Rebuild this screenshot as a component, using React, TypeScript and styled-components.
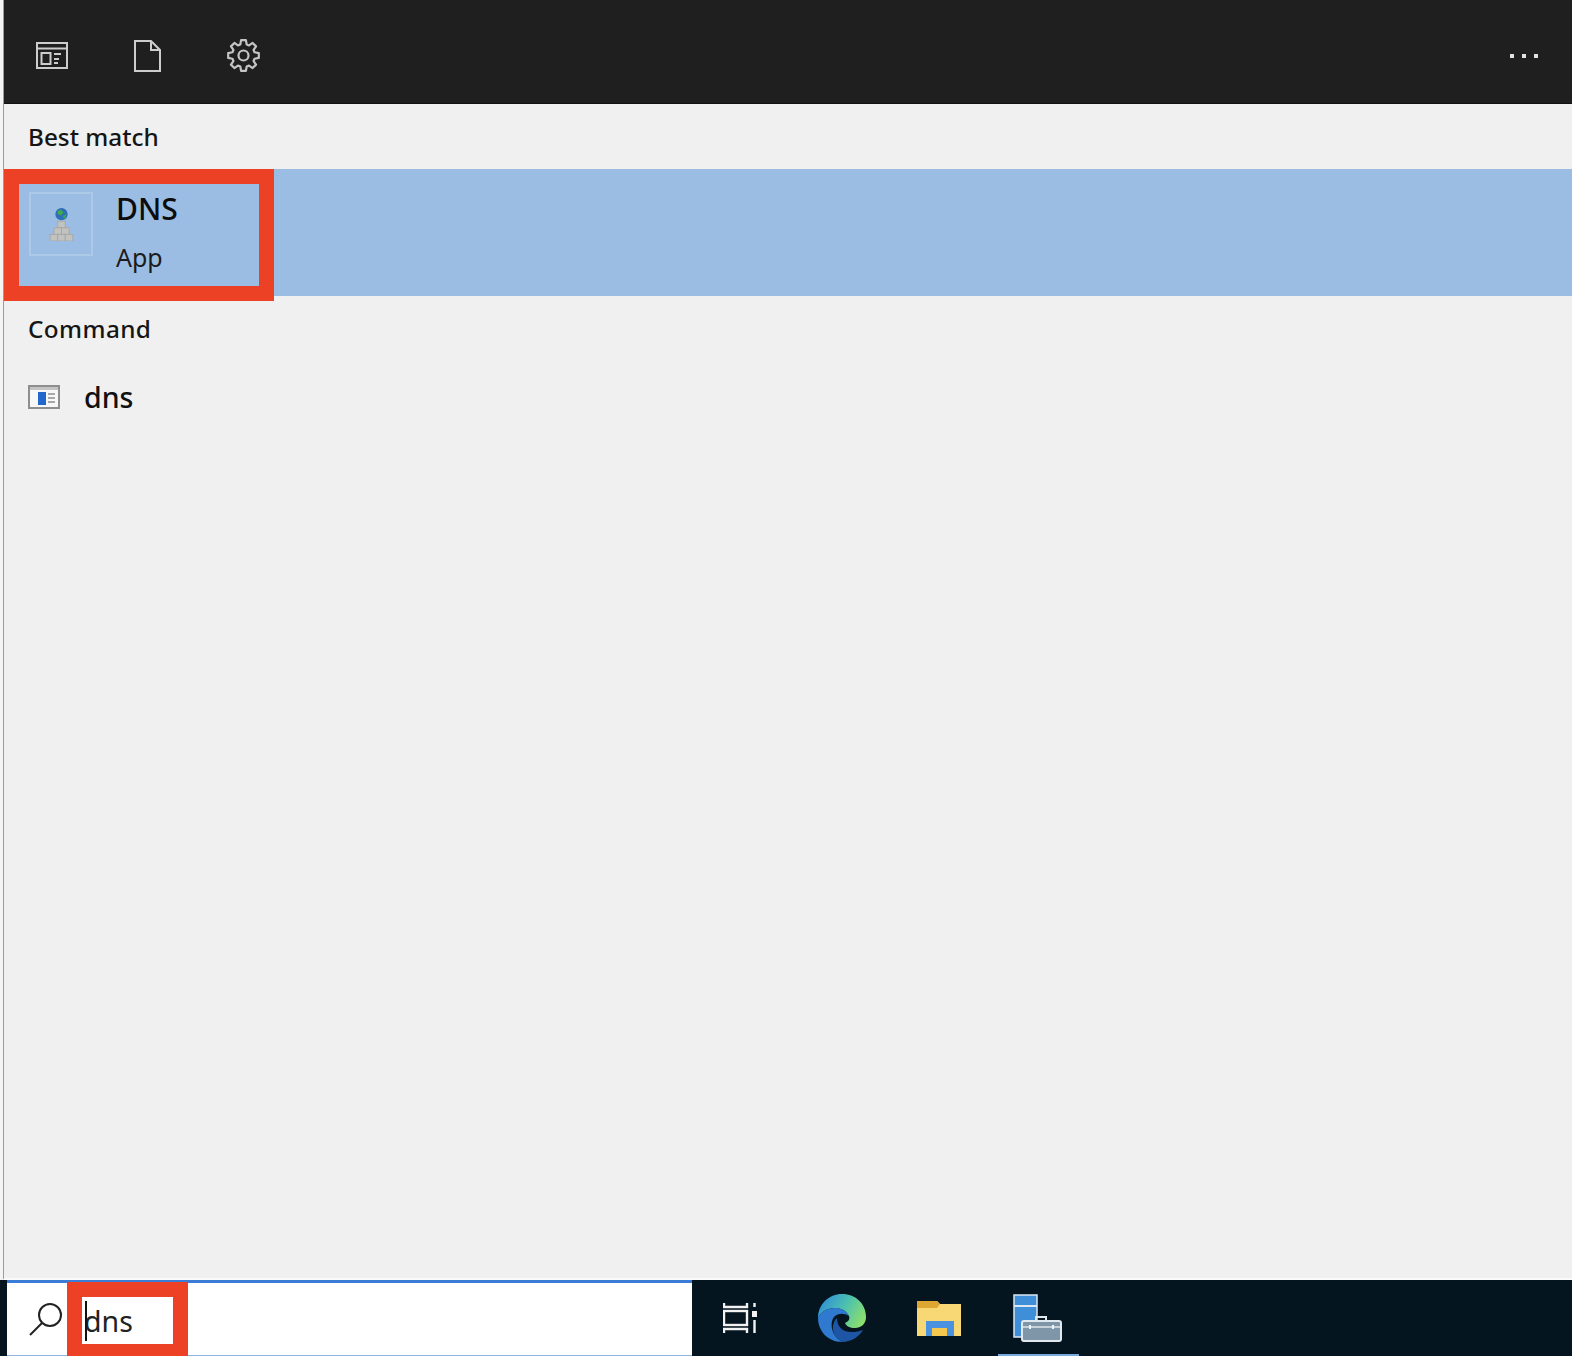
import React from "react";
import styled, { createGlobalStyle } from "styled-components";

const GlobalStyle = createGlobalStyle`
  html, body { margin: 0; padding: 0; background: #f4f4f4; }
  body { font-family: "Noto Sans", "Open Sans", "Liberation Sans", sans-serif; color: #111; }
`;

const Screen = styled.div`
  width: 1572px;
  height: 1356px;
  overflow: hidden;
  display: flex;
  flex-direction: column;
`;
const Panel = styled.div`
  flex: 1;
  display: flex;
  flex-direction: column;
  background: #f0f0f0;
  margin-left: 3px;
  border-left: 1px solid #9c9c9c;
  border-bottom: 2px solid #fafafa;
  min-height: 0;
`;
const TopBar = styled.div`
  height: 104px;
  flex: none;
  background: #1f1f1f;
  border-bottom: 1px solid #111;
  box-sizing: border-box;
  display: flex;
  align-items: center;
  padding: 8px 34px 0 32px;
`;
const TopIcons = styled.div`
  display: flex;
  align-items: center;
  gap: 66px;
  flex: 1;
`;
const Dots = styled.div`
  display: flex;
  gap: 8px;
`;
const Dot = styled.span`
  width: 4px;
  height: 4px;
  background: #e2e2e2;
`;
const SectionTitle = styled.div<{ $height: number; $wide?: boolean }>`
  height: ${(p) => p.$height}px;
  display: flex;
  align-items: center;
  padding-left: 24px;
  font-size: 24.3px;
  font-weight: 500;
  letter-spacing: ${(p) => (p.$wide ? "0.4px" : "0")};
  color: #151515;
`;
const MatchRow = styled.div`
  position: relative;
  height: 127px;
  background: #9bbde3;
  display: flex;
  padding: 23px 0 0 25px;
  box-sizing: border-box;
  gap: 23px;
`;
const AppTile = styled.div`
  width: 64px;
  height: 64px;
  box-sizing: border-box;
  border: 2px solid #adc9e8;
  display: flex;
  align-items: center;
  justify-content: center;
`;
const MatchText = styled.div`
  display: flex;
  flex-direction: column;
  margin-top: -4px;
`;
const MatchName = styled.div`
  font-size: 30px;
  line-height: 42px;
  font-weight: 500;
  color: #0c0c0c;
`;
const MatchKind = styled.div`
  font-size: 25px;
  line-height: 36px;
  margin-top: 9px;
  color: #1b1b1b;
`;
const Callout = styled.div<{ $left: number; $top: number; $width: number; $height: number }>`
  position: absolute;
  left: ${(p) => p.$left}px;
  top: ${(p) => p.$top}px;
  width: ${(p) => p.$width}px;
  height: ${(p) => p.$height}px;
  box-sizing: border-box;
  border: 15px solid #ec4125;
`;
const CommandRow = styled.div`
  display: flex;
  align-items: center;
  gap: 24px;
  padding-left: 24px;
  height: 72px;
  font-size: 28.500px;
  font-weight: 500;
  color: #111;
`;
const Taskbar = styled.div`
  height: 76px;
  flex: none;
  background: #04151f;
  display: flex;
  padding-left: 7px;
`;
const SearchBox = styled.div`
  position: relative;
  width: 685px;
  box-sizing: border-box;
  background: #fff;
  border-top: 3px solid #3b7cd6;
  border-bottom: 1px solid #8fb4e0;
  display: flex;
  align-items: center;
  padding-left: 22px;
  gap: 21px;
`;
const SearchText = styled.div`
  font-size: 28.500px;
  line-height: 40px;
  margin-top: 3px;
  color: #222;
  position: relative;
`;
const Caret = styled.span`
  position: absolute;
  left: 1px;
  top: 0;
  width: 2px;
  height: 40px;
  background: #111;
`;
const TrayIcons = styled.div`
  display: flex;
  align-items: stretch;
  padding-left: 31px;
  gap: 51px;
`;
const TrayItem = styled.div<{ $running?: boolean }>`
  position: relative;
  display: flex;
  align-items: center;
  margin-left: ${(p) => (p.$running ? "1px" : "0")};
  &::after {
    content: "";
    display: ${(p) => (p.$running ? "block" : "none")};
    position: absolute;
    left: -15px;
    right: -17px;
    bottom: 0;
    height: 2px;
    background: #76a9dc;
  }
`;

const gearPath = (() => {
  const pts: string[] = [];
  const cx = 16.5;
  const cy = 16.5;
  const at = (r: number, a: number) =>
    `${(cx + r * Math.cos(a)).toFixed(2)} ${(cy + r * Math.sin(a)).toFixed(2)}`;
  const step = (Math.PI * 2) / 8;
  for (let i = 0; i < 8; i++) {
    const a = i * step - Math.PI / 2;
    pts.push(at(11.500, a - step * 0.36));
    pts.push(at(15.500, a - step * 0.2));
    pts.push(at(15.500, a + step * 0.2));
    pts.push(at(11.500, a + step * 0.36));
  }
  return `M${pts.join("L")}Z`;
})();

const CardIcon = () => (
  <svg width="32" height="27" viewBox="0 0 32 27" fill="none" stroke="#cdcdcd" strokeWidth="2">
    <rect x="1" y="1" width="30" height="25" />
    <path d="M1 6.500h30" />
    <rect x="5.500" y="11" width="9" height="11" />
    <path d="M18 12h7M18 17h5M18 21h4" />
  </svg>
);
const FileIcon = () => (
  <svg width="27" height="32" viewBox="0 0 27 32" fill="none" stroke="#cdcdcd" strokeWidth="2">
    <path d="M1 1h16l9 9v21H1z" />
    <path d="M17 1v9h9" />
  </svg>
);
const GearIcon = () => (
  <svg width="33" height="33" viewBox="0 0 33 33" fill="none" stroke="#c4c4c4" strokeWidth="2.200" strokeLinejoin="round">
    <path d={gearPath} />
    <circle cx="16.500" cy="16.500" r="5" />
  </svg>
);
const DnsIcon = () => (
  <svg width="25" height="33" viewBox="0 0 26 35">
    <circle cx="13" cy="6.500" r="6.500" fill="#2f6fb5" />
    <path d="M9 3l4-1 2 3-3 3-3-2zM15 8l3-1-1 4-2 0z" fill="#3fae4a" />
    <g fill="#c2c2c0" stroke="#a8a8a6" strokeWidth="1">
      <rect x="9" y="14" width="8" height="7" />
      <rect x="5" y="21" width="8" height="7" />
      <rect x="13" y="21" width="8" height="7" />
      <rect x="1" y="28" width="8" height="7" />
      <rect x="9" y="28" width="8" height="7" />
      <rect x="17" y="28" width="8" height="7" />
    </g>
  </svg>
);
const CommandIcon = () => (
  <svg width="32" height="24" viewBox="0 0 32 24">
    <rect x="1" y="1" width="30" height="22" fill="#f7f7f7" stroke="#8e8e8e" strokeWidth="2" />
    <path d="M2 2h28v3H2z" fill="#c4c4c4" />
    <rect x="10" y="7" width="8" height="13" fill="#2267cc" />
    <path d="M20 9h7M20 13h7M20 17h7" stroke="#8e8e8e" strokeWidth="1.500" />
  </svg>
);
const SearchIcon = () => (
  <svg width="34" height="33" viewBox="0 0 34 33" fill="none" stroke="#222" strokeWidth="2">
    <circle cx="21" cy="12" r="11" />
    <path d="M13 20L1 32" />
  </svg>
);
const TaskViewIcon = () => (
  <svg width="44" height="30" viewBox="0 0 44 30" fill="none" stroke="#f2f2f2" strokeWidth="2.400">
    <path d="M1 0v4h23V0M1 30v-4h23v4" />
    <rect x="1" y="8" width="23" height="14" />
    <rect x="29" y="8" width="5" height="6" fill="#f2f2f2" stroke="none" />
    <path d="M31.500 0v4M31.500 17v13" />
  </svg>
);
const EdgeIcon = () => (
  <svg width="48" height="48" viewBox="0 0 48 48">
    <defs>
      <linearGradient id="edgeTop" x1="0" y1="0.300" x2="1" y2="0.700">
        <stop offset="0" stopColor="#2f8fd8" />
        <stop offset="0.500" stopColor="#4cc0b0" />
        <stop offset="1" stopColor="#8ee06a" />
      </linearGradient>
    </defs>
    <path d="M0 24C0 10 11 0 24 0c14 0 24 10 24 23 0 7-5 11-11 11-5 0-9-2-10-5 4-2 5-4 4-7-3-6-9-8-14-8C9 14 3 18 0 24z" fill="url(#edgeTop)" />
    <path d="M0 24c3-6 9-10 17-10 5 0 11 2 14 8-5-3-11-3-15 1-4 5-3 15 3 21l5 4C10 48 0 37 0 24z" fill="#2f7ad0" />
    <path d="M19 24c-5 4-6 14 0 20l5 4c9 0 17-5 21-12-5 2-12 3-18 1-5-2-8-7-8-13z" fill="#1f55a5" />
  </svg>
);
const FolderIcon = () => (
  <svg width="44" height="35" viewBox="0 0 44 35">
    <path d="M0 0h20l3 3h21v32H0z" fill="#f8d775" />
    <path d="M0 0h20l3 3-3 4H0z" fill="#dea632" />
    <path d="M9 35V20h28v15h-7v-8H15v8z" fill="#4a92e0" />
    <rect x="15" y="27" width="15" height="8" fill="#f4c84e" />
  </svg>
);
const ServerManagerIcon = () => (
  <svg width="49" height="48" viewBox="0 0 49 48">
    <rect x="1" y="1" width="23" height="42" fill="#3f8ed8" stroke="#dbe7f2" strokeWidth="1.500" />
    <path d="M1 12h23" stroke="#dbe7f2" strokeWidth="2" />
    <path d="M23 27v-4h10v4" fill="none" stroke="#dfe6ea" strokeWidth="2" />
    <rect x="9" y="27" width="39" height="20" rx="2" fill="#7f95a8" stroke="#e2e9ee" strokeWidth="2" />
    <path d="M10 33h37" stroke="#dfe6ea" strokeWidth="1.500" />
    <path d="M17 31v4M40 31v4" stroke="#f2f5f7" strokeWidth="2" />
  </svg>
);

const App: React.FC = () => (
  <Screen>
    <GlobalStyle />
    <Panel>
      <TopBar>
        <TopIcons>
          <CardIcon />
          <FileIcon />
          <GearIcon />
        </TopIcons>
        <Dots>
          <Dot />
          <Dot />
          <Dot />
        </Dots>
      </TopBar>
      <SectionTitle $height={65}>Best match</SectionTitle>
      <MatchRow>
        <AppTile>
          <DnsIcon />
        </AppTile>
        <MatchText>
          <MatchName>DNS</MatchName>
          <MatchKind>App</MatchKind>
        </MatchText>
        <Callout $left={0} $top={0} $width={270} $height={132} />
      </MatchRow>
      <SectionTitle $height={65} $wide>
        Command
      </SectionTitle>
      <CommandRow>
        <CommandIcon />
        dns
      </CommandRow>
    </Panel>
    <Taskbar>
      <SearchBox>
        <SearchIcon />
        <SearchText>
          <Caret />
          dns
        </SearchText>
        <Callout $left={60} $top={-1} $width={121} $height={77} />
      </SearchBox>
      <TrayIcons>
        <TrayItem>
          <TaskViewIcon />
        </TrayItem>
        <TrayItem>
          <EdgeIcon />
        </TrayItem>
        <TrayItem>
          <FolderIcon />
        </TrayItem>
        <TrayItem $running>
          <ServerManagerIcon />
        </TrayItem>
      </TrayIcons>
    </Taskbar>
  </Screen>
);

export default App;
